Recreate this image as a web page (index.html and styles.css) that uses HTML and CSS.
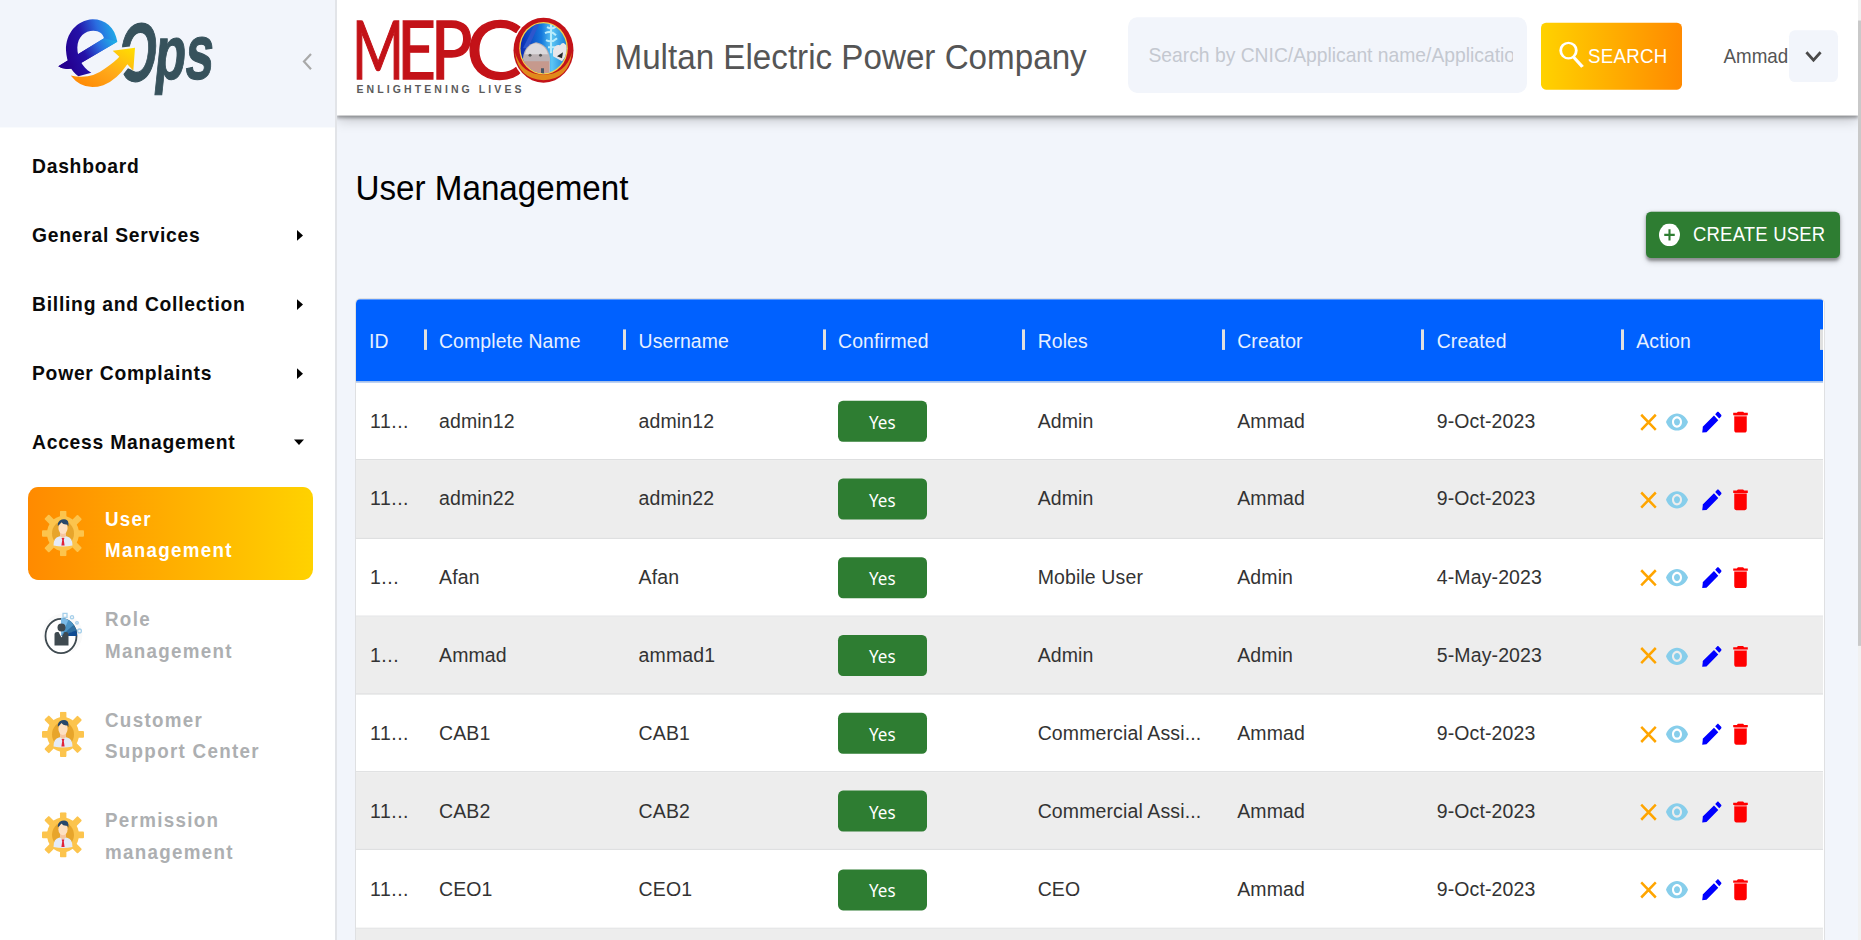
FILE: index.html
```html
<!DOCTYPE html>
<html lang="en">
<head>
<meta charset="utf-8">
<title>User Management</title>
<link rel="stylesheet" href="styles.css">
</head>
<body>
<svg class="defs" width="0" height="0" aria-hidden="true">
  <symbol id="gear" viewBox="0 0 42 45" preserveAspectRatio="none">
    <g fill="#fcc44d">
      <rect x="18" y="0" width="6.4" height="45" rx="1"/>
      <rect x="0" y="19.2" width="42" height="6.6" rx="1"/>
      <rect x="18" y="-1" width="6.4" height="47" rx="1" transform="rotate(45 21 22.5)"/>
      <rect x="18" y="-1" width="6.4" height="47" rx="1" transform="rotate(-45 21 22.5)"/>
      <ellipse cx="21" cy="22.5" rx="16" ry="17.3"/>
    </g>
    <ellipse cx="21" cy="22.5" rx="11" ry="12.2" fill="#e7a52b"/>
    <path d="M11.500 34.500q0-8 5.500-9l4-1 4 1q5.500 1 5.500 9q-9.500 2-19 0z" fill="#e4ebf8"/>
    <path d="M18 20h6v5l-3 2.500-3-2.500z" fill="#f6c6a0"/>
    <ellipse cx="21" cy="17" rx="4.600" ry="6" fill="#fde0c2"/>
    <path d="M15.800 15q-.5-5 4-6.500 6-1.200 6.600 3.500v3.500l-1.200-2q-4 .5-5.800-2.300-1.500 2.300-3.600 3.800z" fill="#26476b"/>
    <path d="M19.600 27h2.800l-.6 2 .8 5.500h-3.200l.8-5.500z" fill="#e0243c"/>
  </symbol>
  <symbol id="role" viewBox="0 0 42 45" preserveAspectRatio="none">
    <circle cx="20.500" cy="22.500" r="20" fill="#fafafa"/>
    <ellipse cx="19" cy="24.500" rx="15.500" ry="17" fill="#fff" stroke="#3f4a50" stroke-width="1.800"/>
    <path d="M19 24.500V6.500q5 0 8 2.500z" fill="#7cbbe6"/>
    <path d="M19 24.500L26.500 8.500q4 2 6 6z" fill="#4a93c4"/>
    <path d="M19 24.500L31.500 13.500q3 4 3.500 6z" fill="#2f6fa0"/>
    <path d="M19 24.500L34 19q1.300 3 1 5.500z" fill="#0f4c93"/>
    <g fill="none" stroke="#a5cfea" stroke-width="1.300"><path d="M21 2h4v4h-4z"/><circle cx="30" cy="6" r="1.600"/><circle cx="35" cy="11.500" r="1.300"/><circle cx="37.500" cy="19.500" r="1.900"/></g>
    <circle cx="19.500" cy="16" r="4" fill="#3f4a50"/>
    <path d="M12.500 34V23q0-2.500 2.500-2.500h1.500l3 5.500 3-5.500H24q2.500 0 2.500 2.500v11z" fill="#3f4a50"/>
  </symbol>
  <symbol id="close" viewBox="0 0 24 24" preserveAspectRatio="none"><path d="M5 5l14 14M19 5L5 19" stroke="orange" stroke-width="2.400"/></symbol>
  <symbol id="eye" viewBox="0 0 24 24" preserveAspectRatio="none"><path fill="skyblue" d="M12 4.500C7 4.500 2.730 7.610 1 12c1.730 4.390 6 7.500 11 7.500s9.270-3.110 11-7.500c-1.730-4.390-6-7.500-11-7.500zM12 17c-2.760 0-5-2.240-5-5s2.240-5 5-5 5 2.240 5 5-2.240 5-5 5zm0-8c-1.660 0-3 1.340-3 3s1.340 3 3 3 3-1.340 3-3-1.340-3-3-3z"/></symbol>
  <symbol id="pen" viewBox="0 0 24 24" preserveAspectRatio="none"><path fill="blue" d="M3.500 17L3 21l4-.3L18 10.300 14 6.300 3.500 16zM20.700 7.040c.39-.39.39-1.020 0-1.410l-2.340-2.340c-.39-.39-1.020-.39-1.410 0l-1.830 1.830 3.750 3.750 1.830-1.830z"/></symbol>
  <symbol id="trash" viewBox="0 0 24 24" preserveAspectRatio="none"><path fill="red" d="M6 19c0 1.100.9 2 2 2h8c1.100 0 2-.9 2-2V7H6v12zM19 4h-3.500l-1-1h-5l-1 1H5v2h14V4z"/><path d="M6 6h12v1H6z" fill="#ff6b6b"/></symbol>
</svg>
<div class="app">
  <aside class="sidebar">
    <div class="brand">
      <svg class="brand-logo" viewBox="56 16 160 82" preserveAspectRatio="none">
        <defs>
          <linearGradient id="ge" x1="0" x2="1" y1="0.300" y2="0"><stop offset="0" stop-color="#240090"/><stop offset=".35" stop-color="#2412a8"/><stop offset=".65" stop-color="#2a6de0"/><stop offset="1" stop-color="#1cc0ea"/></linearGradient>
          <linearGradient id="ga" x1="0" x2="1" y1="1" y2="0"><stop offset="0" stop-color="#ff8200"/><stop offset=".5" stop-color="#ffa91a"/><stop offset="1" stop-color="#ffe000"/></linearGradient>
        </defs>
        <g transform="translate(8.400 0) skewX(-6)" fill="#37525c" stroke="#37525c" stroke-width="1.200" class="ops">
          <text x="116.500" y="80.500" font-size="83" textLength="38" lengthAdjust="spacingAndGlyphs">O</text>
          <text x="153" y="79" font-size="76" textLength="31" lengthAdjust="spacingAndGlyphs">p</text>
          <text x="183.500" y="79" font-size="78" textLength="28" lengthAdjust="spacingAndGlyphs">s</text>
        </g>
        <g transform="scale(.33333)">
          <path d="M330 146L410 137L408 214L384 204L362 232L345 190z" fill="#f2f5fb"/>
          <path d="M352 125C345 80 315 57 278 57C230 60 197 100 198 150C200 185 212 212 235 228L274 218C245 200 232 172 232 142C233 110 255 92 280 92C298 92 308 101 312 114L175 198Q190 210 215 205z" fill="url(#ge)"/>
          <path d="M175 198Q190 210 215 205L352 125L312 114z" fill="url(#ge)"/>
          <path d="M212 226Q270 240 315 205Q345 185 358 170L338 152L405 143L400 212L382 192Q350 240 310 255Q250 275 212 226z" fill="url(#ga)"/>
        </g>
      </svg>
      <svg class="collapse" viewBox="0 0 10 17" preserveAspectRatio="none"><path d="M9 1L2 8.500L9 16" fill="none" stroke="#a9a9a9" stroke-width="2.200"/></svg>
    </div>
    <nav class="menu">
      <a class="item">Dashboard</a>
      <a class="item">General Services<i class="caret right"></i></a>
      <a class="item">Billing and Collection<i class="caret right"></i></a>
      <a class="item">Power Complaints<i class="caret right"></i></a>
      <a class="item">Access Management<i class="caret down"></i></a>
    </nav>
    <nav class="submenu">
      <a class="sub active"><svg><use href="#gear"/></svg><span>User<br>Management</span></a>
      <a class="sub"><svg><use href="#role"/></svg><span>Role<br>Management</span></a>
      <a class="sub"><svg><use href="#gear"/></svg><span>Customer<br>Support Center</span></a>
      <a class="sub"><svg><use href="#gear"/></svg><span>Permission<br>management</span></a>
    </nav>
  </aside>
  <div class="page">
    <header class="topbar">
      <svg class="mepco" viewBox="355 16 222 80" preserveAspectRatio="none">
        <defs>
          <linearGradient id="sky" x1="0" x2="1"><stop offset="0" stop-color="#0a1fae"/><stop offset=".45" stop-color="#1478dc"/><stop offset=".65" stop-color="#5cc6f4"/><stop offset="1" stop-color="#0b6fd0"/></linearGradient>
          <clipPath id="disc"><ellipse cx="543.500" cy="48" rx="23" ry="25"/></clipPath>
        </defs>
        <g class="mepco-letters" fill="#c31218" stroke="#c31218" stroke-width="1.300">
          <text x="352" y="79.300" textLength="52" lengthAdjust="spacingAndGlyphs">M</text>
          <text x="397" y="79.300" textLength="39" lengthAdjust="spacingAndGlyphs">E</text>
          <text x="430.500" y="79.300" textLength="42" lengthAdjust="spacingAndGlyphs">P</text>
          <text x="466" y="79.300" textLength="58" lengthAdjust="spacingAndGlyphs">C</text>
        </g>
        <ellipse cx="543.500" cy="50" rx="31.500" ry="34" fill="#fff"/>
        <ellipse cx="543.500" cy="50" rx="30" ry="32.500" fill="#c31218"/>
        <path d="M515 52Q518 79 543.500 80Q569 79 572 52Q566 74 543.500 74.500Q521 74 515 52z" fill="#e08a1c"/>
        <ellipse cx="543.500" cy="48" rx="24.300" ry="26.300" fill="#f6d04a"/>
        <g clip-path="url(#disc)">
          <path d="M518 20h52v56h-52z" fill="url(#sky)"/>
          <path d="M536 22l4 0-12 26h-5z" fill="#2e56cc"/>
          <path d="M551 23v30M547 27q5 3 9-1M545 33q6-3 11 2M546 40q6 3 11-2M548 47h8" stroke="#b9ecfc" stroke-width="2" fill="none"/>
          <path d="M553 50q2-6 7-5 3-4 5-1 4 2 3 9l-6 8-9-5z" fill="#e8e6ea"/>
          <path d="M557 56l6-4-1 6z" fill="#26292c"/>
          <path d="M523 58q1-13 13-16q12 2 14 16v18h-27z" fill="#bdb3b5"/>
          <path d="M525 54q2-10 11-11 10 2 12 11z" fill="#dcdadd"/>
          <path d="M524 61h25v14h-25z" fill="#c6998d"/>
          <circle cx="530" cy="55" r="1.500" fill="#555"/><circle cx="540.500" cy="55" r="1.500" fill="#555"/>
          <path d="M541 68h3v6h-3z" fill="#456"/>
        </g>
        <text class="tagline" x="356.500" y="92.800" textLength="165" lengthAdjust="spacing">ENLIGHTENING LIVES</text>
      </svg>
      <div class="company">Multan Electric Power Company</div>
      <div class="search"><span>Search by CNIC/Applicant name/Application no</span></div>
      <button class="search-btn"><svg viewBox="0 0 25 34" preserveAspectRatio="none"><ellipse cx="9.500" cy="12" rx="7.800" ry="9.800" fill="none" stroke="#fff" stroke-width="2.800"/><path d="M14.500 20L23.500 32.500" stroke="#fff" stroke-width="3.400"/></svg>SEARCH</button>
      <div class="user">Ammad</div>
      <div class="drop"><svg viewBox="0 0 18 12" preserveAspectRatio="none"><path d="M1.500 1.500L9 9.500L16.500 1.500" fill="none" stroke="#4a4a4a" stroke-width="3"/></svg></div>
    </header>
    <main class="content">
      <h1>User Management</h1>
      <button class="create"><svg viewBox="0 0 22 22" preserveAspectRatio="none"><circle cx="11" cy="11" r="11" fill="#fff"/><path d="M11 5.500v11M5.500 11h11" stroke="#2e7d32" stroke-width="2.200"/></svg>CREATE USER</button>
      <section class="grid">
        <div class="row head"><div>ID</div><div>Complete Name</div><div>Username</div><div>Confirmed</div><div>Roles</div><div>Creator</div><div>Created</div><div>Action</div></div>
        <div class="row"><div>11...</div><div>admin12</div><div>admin12</div><div><b>Yes</b></div><div>Admin</div><div>Ammad</div><div>9-Oct-2023</div><div class="acts"><svg class="x"><use href="#close"/></svg><svg class="e"><use href="#eye"/></svg><svg class="p"><use href="#pen"/></svg><svg class="t"><use href="#trash"/></svg></div></div>
        <div class="row"><div>11...</div><div>admin22</div><div>admin22</div><div><b>Yes</b></div><div>Admin</div><div>Ammad</div><div>9-Oct-2023</div><div class="acts"><svg class="x"><use href="#close"/></svg><svg class="e"><use href="#eye"/></svg><svg class="p"><use href="#pen"/></svg><svg class="t"><use href="#trash"/></svg></div></div>
        <div class="row"><div>1...</div><div>Afan</div><div>Afan</div><div><b>Yes</b></div><div>Mobile User</div><div>Admin</div><div>4-May-2023</div><div class="acts"><svg class="x"><use href="#close"/></svg><svg class="e"><use href="#eye"/></svg><svg class="p"><use href="#pen"/></svg><svg class="t"><use href="#trash"/></svg></div></div>
        <div class="row"><div>1...</div><div>Ammad</div><div>ammad1</div><div><b>Yes</b></div><div>Admin</div><div>Admin</div><div>5-May-2023</div><div class="acts"><svg class="x"><use href="#close"/></svg><svg class="e"><use href="#eye"/></svg><svg class="p"><use href="#pen"/></svg><svg class="t"><use href="#trash"/></svg></div></div>
        <div class="row"><div>11...</div><div>CAB1</div><div>CAB1</div><div><b>Yes</b></div><div>Commercial Assi...</div><div>Ammad</div><div>9-Oct-2023</div><div class="acts"><svg class="x"><use href="#close"/></svg><svg class="e"><use href="#eye"/></svg><svg class="p"><use href="#pen"/></svg><svg class="t"><use href="#trash"/></svg></div></div>
        <div class="row"><div>11...</div><div>CAB2</div><div>CAB2</div><div><b>Yes</b></div><div>Commercial Assi...</div><div>Ammad</div><div>9-Oct-2023</div><div class="acts"><svg class="x"><use href="#close"/></svg><svg class="e"><use href="#eye"/></svg><svg class="p"><use href="#pen"/></svg><svg class="t"><use href="#trash"/></svg></div></div>
        <div class="row"><div>11...</div><div>CEO1</div><div>CEO1</div><div><b>Yes</b></div><div>CEO</div><div>Ammad</div><div>9-Oct-2023</div><div class="acts"><svg class="x"><use href="#close"/></svg><svg class="e"><use href="#eye"/></svg><svg class="p"><use href="#pen"/></svg><svg class="t"><use href="#trash"/></svg></div></div>
        <div class="row"></div>
      </section>
    </main>
  </div>
  <div class="scroll"><div class="thumb"></div></div>
</div>
</body>
</html>
```
FILE: styles.css
```css
* { box-sizing: border-box; }
html, body { margin: 0; height: 940px; overflow: hidden; background: #fff; }
body { font-family: "Liberation Sans", Arial, sans-serif; }
.defs { display: block; height: 0; }
button { font-family: inherit; border: 0; padding: 0; margin: 0; }

/* The interface is drawn slightly taller than wide. */
.app {
  display: flex;
  width: 1861px;
  height: 871px;
  transform: scaleY(1.08);
  transform-origin: 0 0;
  overflow: hidden;
}

.sidebar { flex: none; width: 337px; border-right: 2px solid #e2e4e8; background: #fff; }
.brand { display: flex; align-items: flex-start; height: 117.6px; padding: 14.8px 0 0 56px; background: #f2f5fb; }
.brand-logo { width: 160px; height: 75.9px; overflow: visible; }
.ops { font-family: "Liberation Sans", Arial, sans-serif; font-weight: bold; }
.collapse { width: 10px; height: 16px; margin: 34px 0 0 86px; }

.menu { padding-top: 4.6px; }
.item {
  display: flex; align-items: center; justify-content: space-between;
  height: 63.9px; padding: 0 32px 0 32px;
  font-size: 19.3px; font-weight: bold; letter-spacing: .75px; color: #0a0a0a;
}
.caret { border: solid transparent; }
.caret.right { border-width: 5px 0 5px 6px; border-left-color: #000; }
.caret.down { border-width: 5px 5px 0 5px; border-top-color: #000; margin-right: -1px; }

.submenu { padding: 9px 22px 0 27.5px; }
.sub {
  display: flex; align-items: center; height: 86px; margin-bottom: 7.05px; padding-left: 14.5px; border-radius: 10px;
  font-size: 18.8px; font-weight: bold; letter-spacing: 1.3px; line-height: 29px; color: #adafb1;
}
.sub svg { width: 42px; height: 42px; margin-right: 21px; overflow: visible; }
.sub span { padding-top: 3px; }
.active { background: linear-gradient(90deg, #ff8a00, #ffd200); color: #fff; }

.page { flex: none; width: 1521px; background: #f2f5fb; }
.topbar {
  position: relative; display: flex; align-items: flex-start; height: 107px; background: #fff;
  box-shadow: 0 2px 3px rgba(0,0,0,.32), 0 4px 12px rgba(0,0,0,.2);
  clip-path: inset(0 0 -30px 0);
}
.mepco { width: 222px; height: 74px; margin: 14.8px 0 0 18px; }
.mepco-letters { font-family: Lato, sans-serif; font-size: 81px; }
.tagline { font-family: "Liberation Sans", Arial, sans-serif; font-weight: bold; font-size: 10.5px; fill: #5b5b5b; }
.company { width: 475px; margin: 32.5px 0 0 37.5px; font-size: 33.2px; line-height: 39px; color: #555; white-space: nowrap; }
.search {
  width: 398.5px; height: 69.5px; margin: 16.3px 0 0 38.5px; padding: 0 13.5px 0 20.5px; border-radius: 9px;
  background: #f2f5fb; color: #c4c8d0; font-size: 19.3px;
}
.search span { display: block; height: 69px; line-height: 70.5px; overflow: hidden; white-space: nowrap; }
.search-btn {
  display: flex; align-items: center; width: 141px; height: 62px; margin: 20.6px 0 0 14.5px; padding-left: 18px; border-radius: 5px;
  background: linear-gradient(90deg, #ffd200, #ff8a00); color: #fff; font-size: 18.7px; letter-spacing: .25px;
}
.search-btn svg { flex: none; width: 25px; height: 25px; margin: -2px 4px 0 0; }
.user { width: 65px; margin: 36.5px 0 0 41.5px; font-size: 18.8px; line-height: 29px; color: #555; }
.drop { display: flex; align-items: center; justify-content: center; width: 49px; height: 48.6px; margin-top: 27.8px; border-radius: 6px; background: #f2f5fb; }
.drop svg { width: 17px; height: 11px; }

.content { display: flex; flex-direction: column; padding: 47.4px 18px 0 18px; }
h1 { margin: 0; padding-left: .5px; font-size: 33.2px; font-weight: normal; line-height: 40px; color: #000; }
.create {
  align-self: flex-end; display: flex; align-items: center; width: 194px; height: 43px; margin-top: 1.2px; padding-left: 13px; border-radius: 5px;
  background: #2e7d32; color: #fff; font-size: 18.5px; letter-spacing: .2px; box-shadow: 0 2px 3px rgba(0,0,0,.35), 0 3px 6px rgba(0,0,0,.15);
}
.create svg { width: 21px; height: 21px; margin-right: 13px; }

.grid { width: 1469.5px; height: 620px; margin-top: 37.9px; border: 1px solid #dfe0e2; border-radius: 5px; background: #fff; overflow: hidden; }
.row {
  display: grid; grid-template-columns: 69px repeat(6, 199.55px) 1fr; align-items: center;
  width: 1466.5px;
  height: 72.22px; border-bottom: 1.5px solid #dedfe0; font-size: 19.5px; letter-spacing: .12px; color: #333;
}
.row > div { padding-left: 14px; white-space: nowrap; }
.row > div:first-child { letter-spacing: .5px; }
.row:nth-child(odd) { background: #ededed; }
.row.head { height: 76.7px; background: #0061ff; color: #e8f0ff; font-size: 19.4px; }
.head > div { position: relative; }
.row.head > div:first-child { padding-left: 13px; letter-spacing: 0; }
.head > div + div::before, .head > div:last-child::after {
  content: ""; position: absolute; left: -1.5px; top: 1px; width: 3px; height: 19.5px; background: #e0e0e0;
}
.head > div:last-child::after { left: auto; right: 0; }
.row b {
  display: block; width: 88.5px; height: 38px; margin-top: 1px; border-radius: 5px; background: #2e7d32; color: #fff;
  font: 17px/40.5px "Noto Sans", sans-serif; text-align: center;
}
.acts { display: flex; align-items: center; }
.row > .acts { padding: 2px 0 0 13.5px; }
.x { width: 25px; height: 24px; }
.e { width: 24px; height: 25.5px; margin-left: 4.5px; }
.p { width: 25.7px; height: 25.7px; margin-left: 9.8px; }
.t { width: 25px; height: 25.7px; margin-left: 3.5px; }

.scroll { flex: 1; padding-top: 19.4px; background: #f1f1f1; }
.thumb { height: 579px; background: #c9c9c9; }
```
